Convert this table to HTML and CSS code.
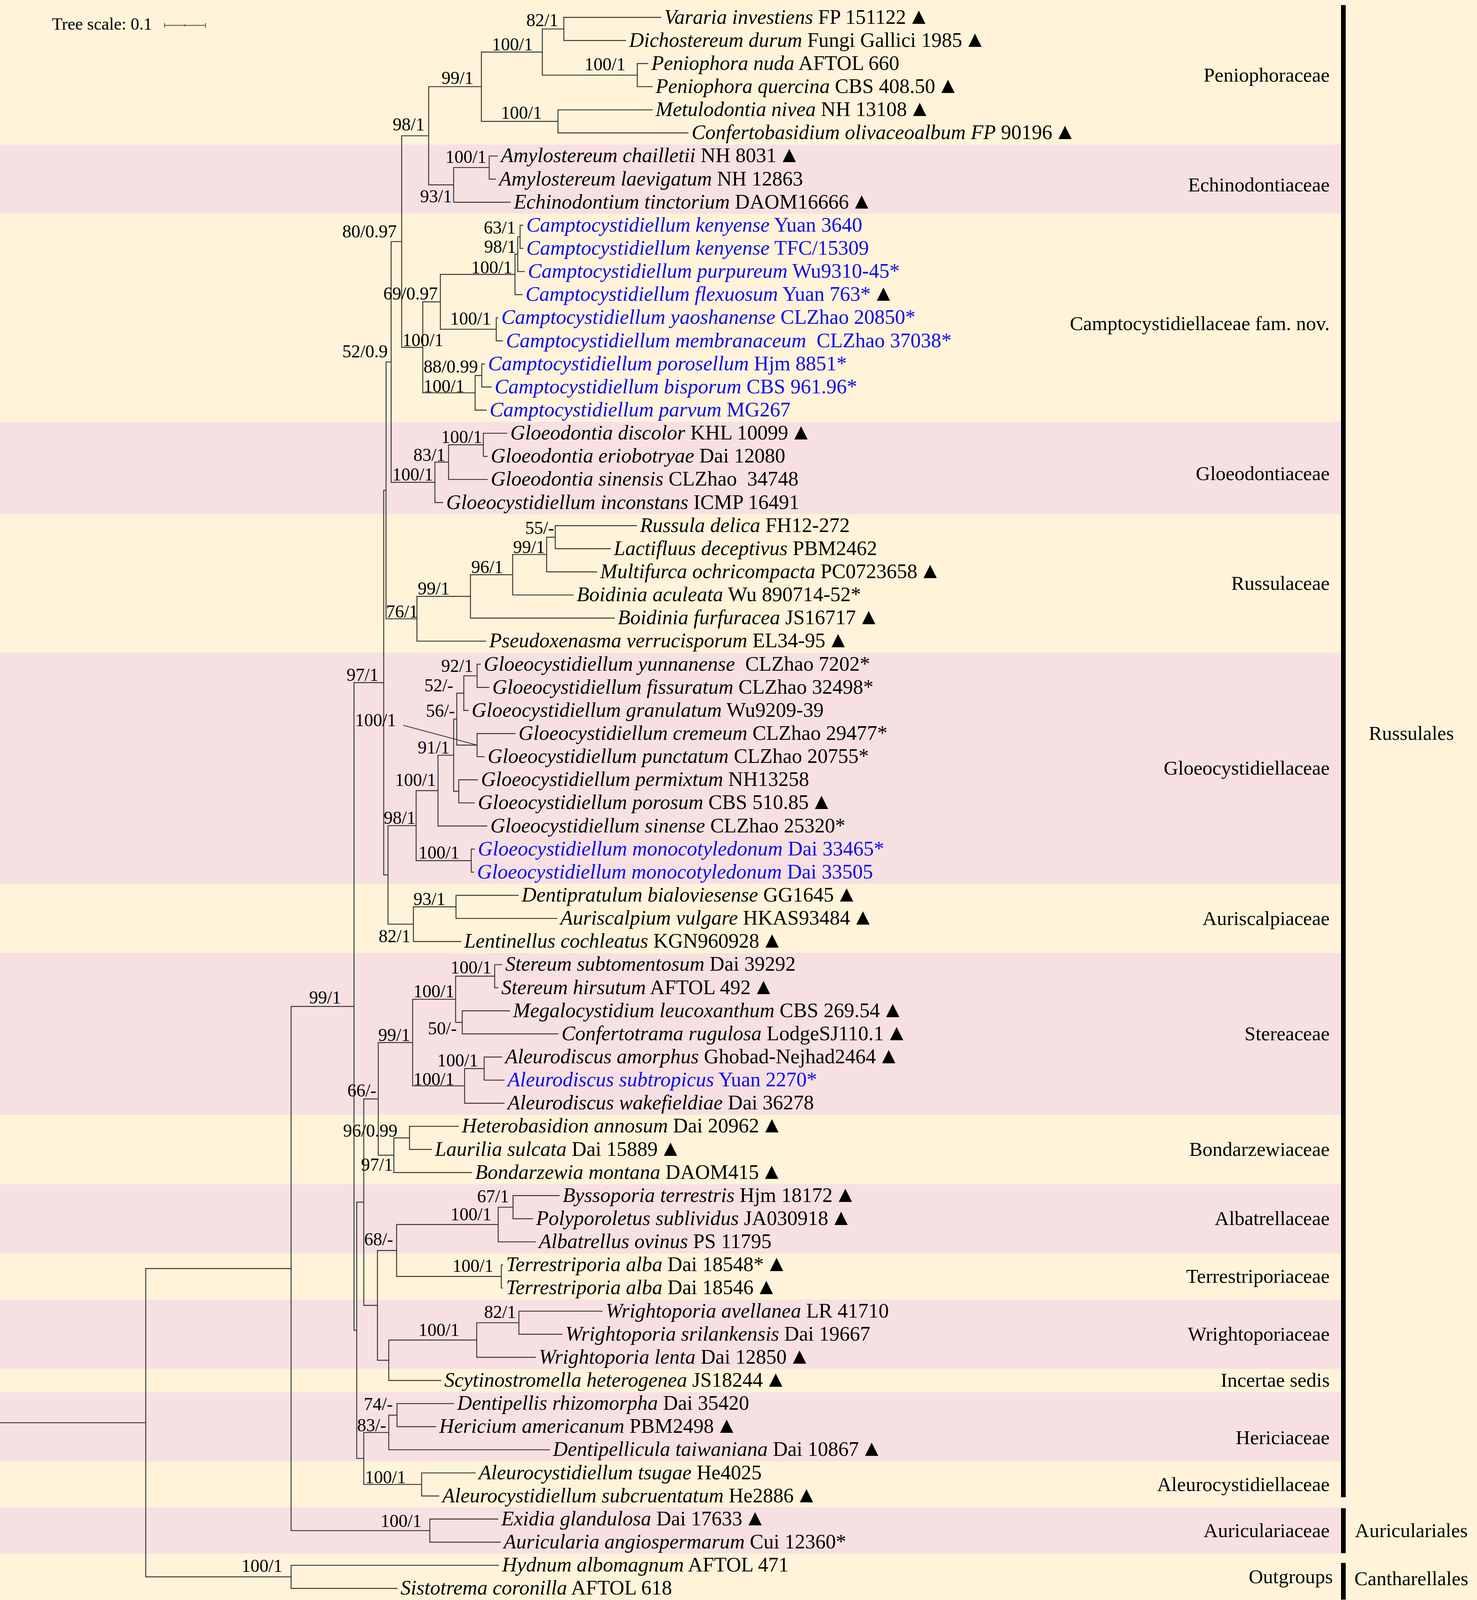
FILE: index.html
```html
<!DOCTYPE html>
<html lang="en">
<head>
<meta charset="utf-8">
<title>Phylogenetic tree of Russulales</title>
<link rel="stylesheet" href="styles.css">
</head>
<body>
<div class="figure">
  <div class="bands">
    <div class="band cream first r6"><span class="fam">Peniophoraceae</span></div>
    <div class="band pink r3 dn"><span class="fam">Echinodontiaceae</span></div>
    <div class="band cream r9 dn"><span class="fam">Camptocystidiellaceae fam. nov.</span></div>
    <div class="band pink r4 dn"><span class="fam">Gloeodontiaceae</span></div>
    <div class="band cream r6"><span class="fam">Russulaceae</span></div>
    <div class="band pink r10"><span class="fam">Gloeocystidiellaceae</span></div>
    <div class="band cream r3"><span class="fam">Auriscalpiaceae</span></div>
    <div class="band pink r7"><span class="fam">Stereaceae</span></div>
    <div class="band cream r3"><span class="fam">Bondarzewiaceae</span></div>
    <div class="band pink r3"><span class="fam">Albatrellaceae</span></div>
    <div class="band cream r2"><span class="fam">Terrestriporiaceae</span></div>
    <div class="band pink r3"><span class="fam">Wrightoporiaceae</span></div>
    <div class="band cream r1"><span class="fam">Incertae sedis</span></div>
    <div class="band pink r3 dn3"><span class="fam">Hericiaceae</span></div>
    <div class="band cream r2"><span class="fam">Aleurocystidiellaceae</span></div>
    <div class="band pink r2"><span class="fam">Auriculariaceae</span></div>
    <div class="band cream r2"><span class="fam fam-out">Outgroups</span></div>
  </div>
  <div class="orders">
    <div class="order order-russ"><span class="ord">Russulales</span></div>
    <div class="order order-auric"><span class="ord">Auriculariales</span></div>
    <div class="order order-canth"><span class="ord">Cantharellales</span></div>
  </div>
  <svg id="tree" class="tree" viewBox="0 0 3780 4096" xmlns="http://www.w3.org/2000/svg">
    <g class="scale">
      <text class="scale-text" x="133" y="76">Tree scale: 0.1</text>
      <path class="scale-bar" d="M421 65H526M421 59V71M526 59V71M473 62V68"></path>
    </g>
    <path id="branches" class="branches" d=""></path>
    <path id="leader" class="leader" d="M1032 1858L1221 1908"></path>
    <g id="supports"></g>
    <g id="tips"></g>
  </svg>
</div>
<script src="tree.js"></script>
</body>
</html>
```

FILE: styles.css
```css
html, body {
  margin: 0;
  padding: 0;
}
body {
  width: 3780px;
  height: 4096px;
  background: #fff3d9;
  font-family: "Liberation Serif", "Times New Roman", serif;
  overflow: hidden;
}
.figure {
  position: relative;
  width: 3780px;
  height: 4096px;
  display: flex;
}
.bands {
  width: 3432px;
  display: flex;
  flex-direction: column;
}
.band {
  box-sizing: border-box;
  display: flex;
  align-items: center;
  justify-content: flex-end;
  padding-right: 29px;
  flex: none;
}
.cream { background: #fff3d9; }
.pink { background: #f7e0e2; }
.r1 { height: 59.145px; }
.r2 { height: 118.29px; }
.r3 { height: 177.435px; }
.r4 { height: 236.58px; }
.r6 { height: 354.87px; }
.r7 { height: 414.015px; }
.r9 { height: 532.305px; }
.r10 { height: 591.45px; }
.band.first { height: 369.81px; padding-top: 14.94px; }
.band.dn { padding-top: 30px; }
.band.dn3 { padding-top: 56px; }
.fam {
  font-size: 51px;
  line-height: 1;
  color: #000;
  white-space: nowrap;
}
.fam-out { margin-right: -8px; }
.orders {
  width: 348px;
  display: flex;
  flex-direction: column;
  padding-top: 13px;
  box-sizing: border-box;
  background: #fff3d9;
}
.order {
  box-sizing: border-box;
  border-left: 12px solid #000;
  display: flex;
  align-items: center;
  justify-content: center;
  flex: none;
}
.order-russ { height: 3820px; padding-bottom: 91px; }
.order-auric { margin-top: 28px; height: 115px; }
.order-canth { margin-top: 25px; height: 94px; padding-bottom: 13px; }
.ord {
  font-size: 51px;
  line-height: 1;
  color: #000;
  white-space: nowrap;
}
.tree {
  position: absolute;
  left: 0;
  top: 0;
  width: 3780px;
  height: 4096px;
  overflow: visible;
}
.branches {
  fill: none;
  stroke: #363636;
  stroke-width: 2.4;
  stroke-linecap: square;
}
.leader {
  fill: none;
  stroke: #363636;
  stroke-width: 2.2;
}
.scale-bar {
  fill: none;
  stroke: #666;
  stroke-width: 2.4;
}
.scale-text {
  font-family: "Liberation Serif", "Times New Roman", serif;
  font-size: 44px;
  fill: #000;
}
.tip {
  font-family: "Liberation Serif", "Times New Roman", serif;
  font-size: 52.5px;
  fill: #000;
  white-space: pre;
}
.tip .it { font-style: italic; }
.tip.blue { fill: #0a0af0; }
.tip .tri {
  fill: #000;
  font-style: normal;
  font-size: 58px;
  font-family: "Liberation Serif", "DejaVu Serif", serif;
}
.sup {
  font-family: "Liberation Serif", "Times New Roman", serif;
  font-size: 46px;
  fill: #000;
  white-space: pre;
}
```

FILE: tree.js
```js
(function () {
  var NS = "http://www.w3.org/2000/svg";
  var K = 4096 / 4388;
  var ROW0 = 47.68 * K, ROWH = 63.36 * K;
  function rowY(i) { return ROW0 + ROWH * (i - 1); }

  var T = {
    1: [1691, "Vararia investiens", " FP 151122", 1, 0],
    2: [1601, "Dichostereum durum", " Fungi Gallici 1985", 1, 0],
    3: [1658, "Peniophora nuda", " AFTOL 660", 0, 0],
    4: [1669, "Peniophora quercina", " CBS 408.50", 1, 0],
    5: [1669, "Metulodontia nivea", " NH 13108", 1, 0],
    6: [1761, "Confertobasidium olivaceoalbum FP", " 90196", 1, 0],
    7: [1273, "Amylostereum chailletii", " NH 8031", 1, 0],
    8: [1268, "Amylostereum laevigatum", " NH 12863", 0, 0],
    9: [1306, "Echinodontium tinctorium", " DAOM16666", 1, 0],
    10: [1338, "Camptocystidiellum kenyense", " Yuan 3640", 0, 1],
    11: [1338, "Camptocystidiellum kenyense", " TFC/15309", 0, 1],
    12: [1342, "Camptocystidiellum purpureum", " Wu9310-45*", 0, 1],
    13: [1336, "Camptocystidiellum flexuosum", " Yuan 763*", 1, 1],
    14: [1274, "Camptocystidiellum yaoshanense", " CLZhao 20850*", 0, 1],
    15: [1286, "Camptocystidiellum membranaceum", "  CLZhao 37038*", 0, 1],
    16: [1240, "Camptocystidiellum porosellum", " Hjm 8851*", 0, 1],
    17: [1257, "Camptocystidiellum bisporum", " CBS 961.96*", 0, 1],
    18: [1244, "Camptocystidiellum parvum", " MG267", 0, 1],
    19: [1297, "Gloeodontia discolor", " KHL 10099", 1, 0],
    20: [1247, "Gloeodontia eriobotryae", " Dai 12080", 0, 0],
    21: [1247, "Gloeodontia sinensis", " CLZhao  34748", 0, 0],
    22: [1133, "Gloeocystidiellum inconstans", " ICMP 16491", 0, 0],
    23: [1629, "Russula delica", " FH12-272", 0, 0],
    24: [1562, "Lactifluus deceptivus", " PBM2462", 0, 0],
    25: [1527, "Multifurca ochricompacta", " PC0723658", 1, 0],
    26: [1467, "Boidinia aculeata", " Wu 890714-52*", 0, 0],
    27: [1572, "Boidinia furfuracea", " JS16717", 1, 0],
    28: [1243, "Pseudoxenasma verrucisporum", " EL34-95", 1, 0],
    29: [1229, "Gloeocystidiellum yunnanense", "  CLZhao 7202*", 0, 0],
    30: [1251, "Gloeocystidiellum fissuratum", " CLZhao 32498*", 0, 0],
    31: [1198, "Gloeocystidiellum granulatum", " Wu9209-39", 0, 0],
    32: [1318, "Gloeocystidiellum cremeum", " CLZhao 29477*", 0, 0],
    33: [1239, "Gloeocystidiellum punctatum", " CLZhao 20755*", 0, 0],
    34: [1222, "Gloeocystidiellum permixtum", " NH13258", 0, 0],
    35: [1214, "Gloeocystidiellum porosum", " CBS 510.85", 1, 0],
    36: [1246, "Gloeocystidiellum sinense", " CLZhao 25320*", 0, 0],
    37: [1214, "Gloeocystidiellum monocotyledonum", " Dai 33465*", 0, 1],
    38: [1212, "Gloeocystidiellum monocotyledonum", " Dai 33505", 0, 1],
    39: [1326, "Dentipratulum bialoviesense", " GG1645", 1, 0],
    40: [1425, "Auriscalpium vulgare", " HKAS93484", 1, 0],
    41: [1179, "Lentinellus cochleatus", " KGN960928", 1, 0],
    42: [1284, "Stereum subtomentosum", " Dai 39292", 0, 0],
    43: [1274, "Stereum hirsutum", " AFTOL 492", 1, 0],
    44: [1304, "Megalocystidium leucoxanthum", " CBS 269.54", 1, 0],
    45: [1428, "Confertotrama rugulosa", " LodgeSJ110.1", 1, 0],
    46: [1284, "Aleurodiscus amorphus", " Ghobad-Nejhad2464", 1, 0],
    47: [1290, "Aleurodiscus subtropicus", " Yuan 2270*", 0, 1],
    48: [1290, "Aleurodiscus wakefieldiae", " Dai 36278", 0, 0],
    49: [1173, "Heterobasidion annosum", " Dai 20962", 1, 0],
    50: [1104, "Laurilia sulcata", " Dai 15889", 1, 0],
    51: [1207, "Bondarzewia montana", " DAOM415", 1, 0],
    52: [1431, "Byssoporia terrestris", " Hjm 18172", 1, 0],
    53: [1363, "Polyporoletus sublividus", " JA030918", 1, 0],
    54: [1370, "Albatrellus ovinus", " PS 11795", 0, 0],
    55: [1286, "Terrestriporia alba", " Dai 18548*", 1, 0],
    56: [1286, "Terrestriporia alba", " Dai 18546", 1, 0],
    57: [1541, "Wrightoporia avellanea", " LR 41710", 0, 0],
    58: [1438, "Wrightoporia srilankensis", " Dai 19667", 0, 0],
    59: [1370, "Wrightoporia lenta", " Dai 12850", 1, 0],
    60: [1128, "Scytinostromella heterogenea", " JS18244", 1, 0],
    61: [1161, "Dentipellis rhizomorpha", " Dai 35420", 0, 0],
    62: [1115, "Hericium americanum", " PBM2498", 1, 0],
    63: [1406, "Dentipellicula taiwaniana", " Dai 10867", 1, 0],
    64: [1216, "Aleurocystidiellum tsugae", " He4025", 0, 0],
    65: [1123, "Aleurocystidiellum subcruentatum", " He2886", 1, 0],
    66: [1274, "Exidia glandulosa", " Dai 17633", 1, 0],
    67: [1280, "Auricularia angiospermarum", " Cui 12360*", 0, 0],
    68: [1276, "Hydnum albomagnum", " AFTOL 471", 0, 0],
    69: [1016, "Sistotrema coronilla", " AFTOL 618", 0, 0]
  };

  var N = {
    root: [373, "R745", "OUT"],
    OUT: [745, 68, 69],
    R745: [745, "RUSS", "AUR"],
    AUR: [1100, 66, 67],
    RUSS: [906, "N97", "N914"],
    N97: [982, "NA", "NB"],
    NA: [988, "N52", "N76"],
    N52: [1001, "N80", "GLO"],
    N80: [1028, "N98", "CAM"],
    N98: [1097, "P99", "E93"],
    P99: [1232, "P100", "MET"],
    P100: [1388, "P82", "PEN"],
    P82: [1443, 1, 2],
    PEN: [1631, 3, 4],
    MET: [1428, 5, 6],
    E93: [1161, "AMY", 9],
    AMY: [1252, 7, 8],
    CAM: [1082, "C69", "C100c"],
    C69: [1127, "C100a", "YAO"],
    C100a: [1318, "C98", 13],
    C98: [1325, "C63", 12],
    C63: [1331, 10, 11],
    YAO: [1270, 14, 15],
    C100c: [1216, "C88", 18],
    C88: [1233, 16, 17],
    GLO: [1113, "G83", 22],
    G83: [1148, "DISC", 21],
    DISC: [1237, 19, 20],
    N76: [1067, "R99", 28],
    R99: [1204, "R96", 27],
    R96: [1312, "R99b", 26],
    R99b: [1399, "R55", 25],
    R55: [1421, 23, 24],
    NB: [993, "G98", "AUS"],
    G98: [1065, "G100", "MONO"],
    G100: [1121, "G91", 36],
    G91: [1161, "G56", "PERM"],
    G56: [1169, "G52", "CREM"],
    G52: [1187, "G92", 31],
    G92: [1221, 29, 30],
    CREM: [1221, 32, 33],
    PERM: [1174, 34, 35],
    MONO: [1206, 37, 38],
    AUS: [1058, "A93", 41],
    A93: [1167, 39, 40],
    N914: [913, "N96", "HER"],
    N96: [931, "N66", "N966"],
    N66: [968, "S99", "B97"],
    S99: [1056, "S100", "ALE"],
    S100: [1166, "STE", "S50"],
    STE: [1266, 42, 43],
    S50: [1183, 44, 45],
    ALE: [1189, "AMO", 48],
    AMO: [1239, 46, 47],
    B97: [1008, "HET", 51],
    HET: [1048, 49, 50],
    N966: [966, "N68", "WS"],
    N68: [1015, "ALB", "TER"],
    ALB: [1275, "A67", 54],
    A67: [1313, 52, 53],
    TER: [1283, 55, 56],
    WS: [995, "WR", 60],
    WR: [1220, "W82", 59],
    W82: [1328, 57, 58],
    HER: [931, "H83", "ALC"],
    H83: [995, "H74", 63],
    H74: [1016, 61, 62],
    ALC: [1079, 64, 65]
  };

  // [text, left x, baseline y (in the 4388-tall reference frame)]
  var S = [
    ["82/1", 1347, 70], ["100/1", 1259, 136], ["99/1", 1130, 228], ["100/1", 1496, 191], ["100/1", 1282, 323],
    ["98/1", 1005, 356], ["100/1", 1140, 444], ["93/1", 1075, 553],
    ["80/0.97", 876, 649], ["63/1", 1238, 638], ["98/1", 1239, 691], ["100/1", 1206, 748],
    ["69/0.97", 981, 820], ["100/1", 1152, 888], ["100/1", 1030, 947], ["52/0.9", 876, 978],
    ["88/0.99", 1084, 1020], ["100/1", 1084, 1073],
    ["100/1", 1129, 1213], ["83/1", 1058, 1262], ["100/1", 1004, 1316],
    ["55/-", 1344, 1462], ["99/1", 1313, 1515], ["96/1", 1206, 1569], ["99/1", 1069, 1628], ["76/1", 988, 1691],
    ["92/1", 1129, 1840], ["97/1", 887, 1865], ["52/-", 1086, 1894], ["56/-", 1090, 1964], ["100/1", 909, 1989],
    ["91/1", 1069, 2064], ["100/1", 1011, 2153], ["98/1", 982, 2257], ["100/1", 1071, 2352],
    ["93/1", 1058, 2480], ["82/1", 969, 2582],
    ["100/1", 1153, 2667], ["100/1", 1058, 2733], ["99/1", 791, 2750], ["50/-", 1095, 2835], ["99/1", 968, 2853],
    ["100/1", 1119, 2922], ["100/1", 1058, 2974], ["66/-", 889, 3005], ["96/0.99", 878, 3115], ["97/1", 924, 3208],
    ["67/1", 1221, 3295], ["100/1", 1153, 3345], ["68/-", 932, 3413], ["100/1", 1158, 3486],
    ["82/1", 1239, 3612], ["100/1", 1071, 3662],
    ["74/-", 931, 3865], ["83/-", 914, 3923], ["100/1", 934, 4065], ["100/1", 974, 4186], ["100/1", 618, 4309]
  ];

  var d = "";
  function r(v) { return Math.round(v * 10) / 10; }
  function place(id) {
    if (typeof id === "number") { return [T[id][0], rowY(id)]; }
    var n = N[id], x = n[0];
    var a = place(n[1]), b = place(n[2]);
    d += "M" + x + " " + r(a[1]) + "V" + r(b[1]);
    d += "M" + x + " " + r(a[1]) + "H" + a[0];
    d += "M" + x + " " + r(b[1]) + "H" + b[0];
    return [x, (a[1] + b[1]) / 2];
  }
  var rootPos = place("root");
  d += "M0 " + r(rootPos[1]) + "H" + N.root[0];
  document.getElementById("branches").setAttribute("d", d);

  var cremY = (rowY(32) + rowY(33)) / 2;
  document.getElementById("leader").setAttribute("d",
    "M1032 " + r((1990 - 4) * K + 3) + "L1221 " + r(cremY));

  function el(name, cls, text) {
    var e = document.createElementNS(NS, name);
    if (cls) { e.setAttribute("class", cls); }
    if (text !== undefined) { e.textContent = text; }
    return e;
  }

  var tipsG = document.getElementById("tips");
  Object.keys(T).forEach(function (k) {
    var i = parseInt(k, 10), t = T[i];
    var txt = el("text", t[4] ? "tip blue" : "tip");
    txt.setAttribute("x", t[0] + 9);
    txt.setAttribute("y", r(rowY(i) + 16));
    txt.setAttributeNS("http://www.w3.org/XML/1998/namespace", "xml:space", "preserve");
    txt.appendChild(el("tspan", "it", t[1]));
    txt.appendChild(el("tspan", "rm", t[2]));
    if (t[3]) {
      var tri = el("tspan", "tri", "\u25B2");
      tri.setAttribute("dx", "4");
      txt.appendChild(tri);
    }
    tipsG.appendChild(txt);
  });

  var supG = document.getElementById("supports");
  S.forEach(function (s) {
    var txt = el("text", "sup", s[0]);
    txt.setAttribute("x", s[1]);
    txt.setAttribute("y", r(s[2] * K + 2));
    supG.appendChild(txt);
  });
})();
```
